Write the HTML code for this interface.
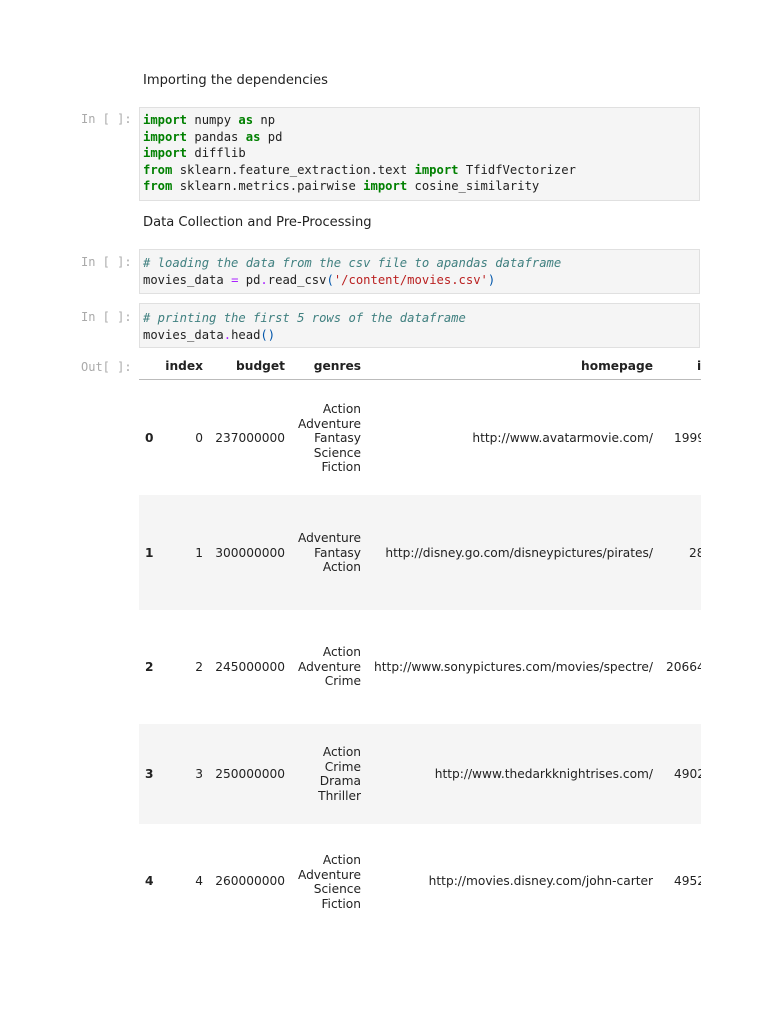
<!DOCTYPE html>
<html><head><meta charset="utf-8"><style>
body{margin:0;background:#fff;width:768px;height:1024px;position:relative;overflow:hidden;font-family:"DejaVu Sans","Liberation Sans",sans-serif;color:#222}
.a{position:absolute;white-space:pre}
.md{font-size:13.1px;left:143px}
.pr{font-family:"DejaVu Sans Mono",monospace;font-size:12px;color:#aaa;left:81px}
.box{position:absolute;left:139px;width:561px;background:#f5f5f5;border:1px solid #e0e0e0;box-sizing:border-box}
.code{position:absolute;left:143px;font-family:"DejaVu Sans Mono",monospace;font-size:12.2px;line-height:16.5px;white-space:pre;color:#222}
.k{color:#008000;font-weight:bold}.c{color:#408080;font-style:italic}.o{color:#aa22ff}.s{color:#ba2121}.p{color:#0055aa}
.t{font-size:12.2px;line-height:14.5px;text-align:right;position:absolute;white-space:pre}
.b{font-weight:bold}
.band{position:absolute;left:139px;width:562px;background:#f5f5f5}
</style></head><body>
<div class="a md" style="top:73px">Importing the dependencies</div>
<div class="a pr" style="top:112px">In [ ]:</div>
<div class="box" style="top:107px;height:94px"></div>
<div class="code" style="top:112px"><span class="k">import</span> numpy <span class="k">as</span> np
<span class="k">import</span> pandas <span class="k">as</span> pd
<span class="k">import</span> difflib
<span class="k">from</span> sklearn.feature_extraction.text <span class="k">import</span> TfidfVectorizer
<span class="k">from</span> sklearn.metrics.pairwise <span class="k">import</span> cosine_similarity</div>
<div class="a md" style="top:215px">Data Collection and Pre-Processing</div>
<div class="a pr" style="top:255px">In [ ]:</div>
<div class="box" style="top:249px;height:45px"></div>
<div class="code" style="top:255px"><span class="c"># loading the data from the csv file to apandas dataframe</span>
movies_data <span class="o">=</span> pd<span class="o">.</span>read_csv<span class="p">(</span><span class="s">'/content/movies.csv'</span><span class="p">)</span></div>
<div class="a pr" style="top:310px">In [ ]:</div>
<div class="box" style="top:303px;height:45px"></div>
<div class="code" style="top:310px"><span class="c"># printing the first 5 rows of the dataframe</span>
movies_data<span class="o">.</span>head<span class="p">()</span></div>
<div class="a pr" style="top:360px">Out[ ]:</div>
<div style="position:absolute;left:139px;width:562px;top:379px;height:1px;background:#bbb"></div>
<div class="band" style="top:495px;height:115px"></div>
<div class="band" style="top:724px;height:100px"></div>
<div style="position:absolute;left:139px;top:351px;width:562px;height:600px;overflow:hidden">
<div class="t b" style="right:498px;top:8px">index</div>
<div class="t b" style="right:416px;top:8px">budget</div>
<div class="t b" style="right:340px;top:8px">genres</div>
<div class="t b" style="right:48px;top:8px">homepage</div>
<div class="t b" style="left:558px;top:8px">id</div>

<div class="t b" style="left:6px;top:80px">0</div><div class="t" style="right:498px;top:80px">0</div><div class="t" style="right:416px;top:80px">237000000</div>
<div class="t" style="right:340px;top:51px">Action
Adventure
Fantasy
Science
Fiction</div><div class="t" style="right:48px;top:80px">http://www.avatarmovie.com/</div><div class="t" style="left:535px;top:80px">19995</div>

<div class="t b" style="left:6px;top:195px">1</div><div class="t" style="right:498px;top:195px">1</div><div class="t" style="right:416px;top:195px">300000000</div>
<div class="t" style="right:340px;top:180px">Adventure
Fantasy
Action</div><div class="t" style="right:48px;top:195px">http://disney.go.com/disneypictures/pirates/</div><div class="t" style="left:550px;top:195px">285</div>

<div class="t b" style="left:6px;top:309px">2</div><div class="t" style="right:498px;top:309px">2</div><div class="t" style="right:416px;top:309px">245000000</div>
<div class="t" style="right:340px;top:294px">Action
Adventure
Crime</div><div class="t" style="right:48px;top:309px">http://www.sonypictures.com/movies/spectre/</div><div class="t" style="left:527px;top:309px">206647</div>

<div class="t b" style="left:6px;top:416px">3</div><div class="t" style="right:498px;top:416px">3</div><div class="t" style="right:416px;top:416px">250000000</div>
<div class="t" style="right:340px;top:394px">Action
Crime
Drama
Thriller</div><div class="t" style="right:48px;top:416px">http://www.thedarkknightrises.com/</div><div class="t" style="left:535px;top:416px">49026</div>

<div class="t b" style="left:6px;top:523px">4</div><div class="t" style="right:498px;top:523px">4</div><div class="t" style="right:416px;top:523px">260000000</div>
<div class="t" style="right:340px;top:502px">Action
Adventure
Science
Fiction</div><div class="t" style="right:48px;top:523px">http://movies.disney.com/john-carter</div><div class="t" style="left:535px;top:523px">49529</div>
</div>
</body></html>
